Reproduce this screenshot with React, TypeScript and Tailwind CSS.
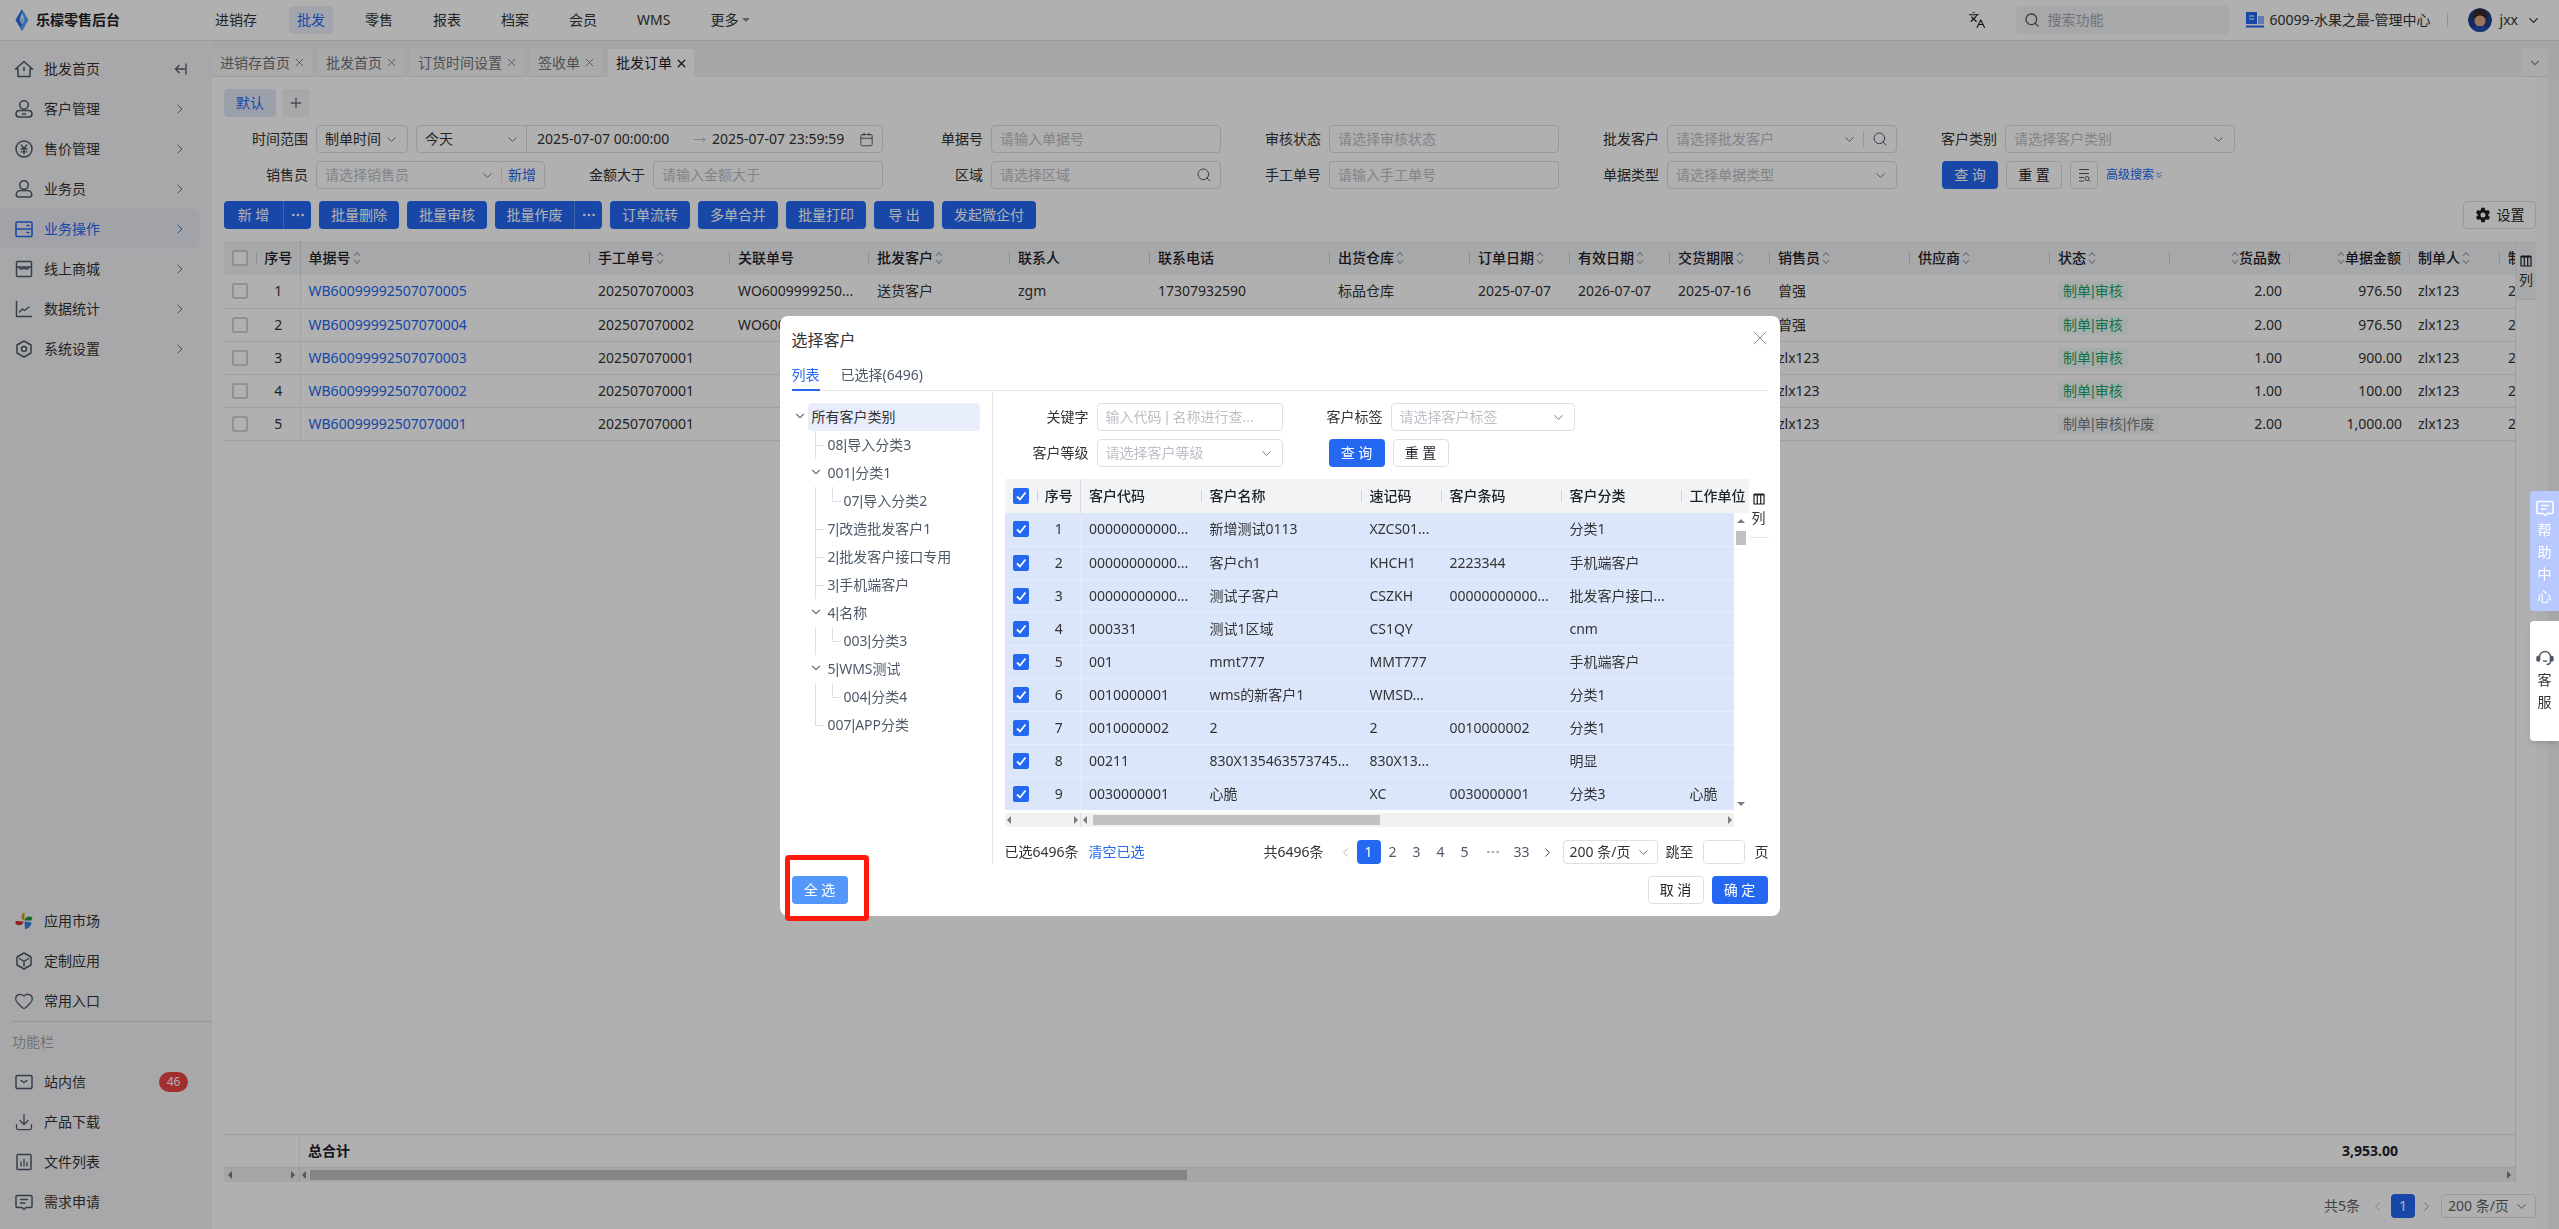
import { Fragment, ReactNode } from 'react';
import {
  ChevronDown,
  ChevronLeft,
  ChevronRight,
  Search,
  Plus,
  X,
  Heart,
  Download,
  Languages,
  Ellipsis,
  Calendar,
  MoveRight,
  ChevronsDown,
} from 'lucide-react';
import { IoSettingsSharp } from 'react-icons/io5';

const Svg = ({ children, className = 'text-[#4e5969]' }: { children: ReactNode; className?: string }) => (
  <svg viewBox="0 0 20 20" fill="none" stroke="currentColor" strokeWidth="1.5" strokeLinecap="round" strokeLinejoin="round" className={`w-5 h-5 shrink-0 ${className}`}>
    {children}
  </svg>
);

const HomeIcon = () => (
  <Svg>
    <path d="M1.5 10 10 2.5 18.5 10H16v7.5H4V10z" />
    <path d="M10 8.5v3" />
  </Svg>
);
const CustomerIcon = () => (
  <Svg>
    <circle cx="10" cy="6" r="4.2" />
    <rect x="2" y="11.5" width="16" height="6.5" rx="3.2" />
    <path d="M8.5 15h3" />
  </Svg>
);
const YenIcon = () => (
  <Svg>
    <circle cx="10" cy="10" r="8" />
    <path d="m7.3 6 2.7 3.5L12.7 6M7 10h6M7 12.8h6M10 9.5V15" strokeWidth="1.3" />
  </Svg>
);
const UserIcon = () => (
  <Svg>
    <circle cx="10" cy="6" r="4.3" />
    <path d="M2.2 15.5c0-2.5 2.3-4 4.8-4h6c2.5 0 4.8 1.5 4.8 4 0 1.5-1 2.5-2.5 2.5H4.7c-1.500 0-2.500-1-2.500-2.500z" />
  </Svg>
);
const OpsIcon = () => (
  <Svg className="text-[#2468f2]">
    <rect x="2" y="3" width="16" height="14.5" rx="1" />
    <path d="M2 10h16M13 6.500h2M13 13.500h2" />
  </Svg>
);
const StoreIcon = () => (
  <Svg>
    <rect x="2.5" y="2.5" width="15" height="15" rx="1" />
    <path d="M2.500 8h15M5 8a2.500 2 0 0 0 5 0 2.500 2 0 0 0 5 0" strokeWidth="1.3" />
  </Svg>
);
const ChartIcon = () => (
  <Svg>
    <path d="M2.500 2.500v15h15" />
    <path d="m5.500 13 3-3 2 1.500L15 8" strokeWidth="1.3" />
  </Svg>
);
const HexIcon = () => (
  <Svg>
    <path d="M10 2 17 6v8l-7 4-7-4V6z" />
    <circle cx="10" cy="10" r="2.5" />
  </Svg>
);
const BoxIcon = () => (
  <Svg>
    <path d="M10 2 17 6v8l-7 4-7-4V6z" />
    <path d="m5.500 7.500 4.500 3 4.500-3M10 10.500V15" />
  </Svg>
);
const PinwheelIcon = () => (
  <svg viewBox="0 0 20 20" className="w-5 h-5 shrink-0">
    <path d="M9.500 9.500C6.500 7.500 7 2.500 10.500 1.500V9z" fill="#d79b09" />
    <path d="M10.500 9.500C11 6 15 4 18.500 6.500l-1 3z" fill="#1f9d3a" />
    <path d="M10.500 10.500c3 0 5.500 1 7 1-0.500 4-3.500 6.500-6.500 6.500z" fill="#2f80e0" />
    <path d="M9.500 10.500C9 14 5 15.500 1.800 13c-0.500-1 -0.300-2.500 0.200-3z" fill="#d32f2f" />
  </svg>
);
const InboxIcon = () => (
  <Svg>
    <rect x="2" y="3.5" width="16" height="13" rx="1.2" />
    <path d="m7 8.500 3 2 3-2" />
  </Svg>
);
const FileBarsIcon = () => (
  <Svg>
    <rect x="3" y="2.5" width="14" height="15" rx="1" />
    <path d="M7 10v4M10 7.500V14M13 10.500V14" strokeWidth="1.3" />
  </Svg>
);
const CommentIcon = ({ className }: { className?: string }) => (
  <Svg className={className}>
    <path d="M3 3.500h14a1 1 0 0 1 1 1v10a1 1 0 0 1-1 1h-5l-2 2-2-2H3a1 1 0 0 1-1-1v-10a1 1 0 0 1 1-1z" />
    <path d="M6.500 7.500h7M6.500 11H11" />
  </Svg>
);

const Sort = () => (
  <svg viewBox="0 0 8 14" className="w-2 h-3.5 ml-0.5 shrink-0 text-[#9aa0a8]" fill="none" stroke="currentColor" strokeWidth="1.1">
    <path d="M1 5 4 1.500 7 5M1 9l3 3.500L7 9" />
  </svg>
);

const ColsIcon = () => (
  <svg viewBox="0 0 12 12" className="w-3 h-3" fill="none" stroke="#1d2129" strokeWidth="1.2">
    <path d="M1 1.500h10v9.500H1zM4.300 2v9M7.700 2v9" />
    <path d="M1 1.500h10" strokeWidth="2" />
  </svg>
);

const Tri = ({ dir }: { dir: 'l' | 'r' | 'u' | 'd' }) => {
  const points = { l: '6,1 6,9 2,5', r: '4,1 4,9 8,5', u: '1,6 9,6 5,2', d: '1,4 9,4 5,8' }[dir];
  return (
    <svg viewBox="0 0 10 10" className="w-2.5 h-2.5 shrink-0">
      <polygon points={points} fill="#7d7d7d" />
    </svg>
  );
};

// the bar in these labels is much narrower in the reference than Noto Sans draws it
const Barred = ({ text }: { text: string }) => (
  <>
    {text.split('|').map((part, i) => (
      <Fragment key={i}>
        {i > 0 && <span className="font-['Liberation_Sans']">|</span>}
        {part}
      </Fragment>
    ))}
  </>
);

const Check = () => (
  <span className="flex items-center justify-center w-4 h-4 rounded-[2px] bg-[#2468f2] shrink-0">
    <svg viewBox="0 0 12 12" className="w-3 h-3" fill="none" stroke="#fff" strokeWidth="1.8">
      <path d="m2 6.500 3 3 5.500-7" />
    </svg>
  </span>
);
const Box = () => <span className="block w-4 h-4 rounded-[2px] border-2 border-[#d0d3d8] bg-white shrink-0" />;

const Field = ({ children, className = '' }: { children: ReactNode; className?: string }) => (
  <div className={`flex items-center h-7 px-2 border border-[#dcdfe6] rounded bg-white text-sm leading-none whitespace-nowrap ${className}`}>
    {children}
  </div>
);
const Ph = ({ children }: { children: ReactNode }) => <span className="flex-1 text-[#bdc0c6] truncate leading-5">{children}</span>;
const Down = () => <ChevronDown size={15} strokeWidth={1.6} className="text-[#77797e] shrink-0" />;

const Btn = ({ children, className = '' }: { children: ReactNode; className?: string }) => (
  <div className={`flex items-center justify-center h-7 rounded bg-[#2468f2] text-white text-sm whitespace-nowrap ${className}`}>{children}</div>
);
const GhostBtn = ({ children, className = '' }: { children: ReactNode; className?: string }) => (
  <div className={`flex items-center justify-center h-7 rounded border border-[#dcdfe6] bg-white text-sm text-[#1d2129] whitespace-nowrap ${className}`}>{children}</div>
);

const FormCell = ({ label, children, className = '' }: { label: string; children: ReactNode; className?: string }) => (
  <div className={`flex items-center justify-end ${className}`}>
    <span className="mr-2 text-sm text-[#333] whitespace-nowrap">{label}</span>
    {children}
  </div>
);

const mainNav = ['批发', '零售', '报表', '档案', '会员', 'WMS'];

const TopBar = () => (
  <header className="flex items-center h-[41px] border-b border-[#e0e1e4] bg-white shrink-0">
    <div className="flex items-center w-[207px] pl-3.5 shrink-0">
      <svg viewBox="0 0 16 24" className="w-4 h-6 shrink-0">
        <path d="M8 1 1.500 12 8 23l2-3.500L5.500 12 8 5z" fill="#2468f2" />
        <path d="M8 1l6.500 11L8 23l-2-3.500L10.500 12 8 5z" fill="#5aa0f5" />
        <path d="M8 8.500 10 12l-2 3.500L6 12z" fill="#9cc5fa" />
      </svg>
      <span className="ml-1.5 text-sm font-bold text-[#1d2129]">乐檬零售后台</span>
    </div>
    <nav className="flex items-center gap-6 text-sm text-[#333]">
      <span className="px-2">进销存</span>
      {mainNav.map((n) => (
        <span key={n} className={`flex items-center h-7 px-2 rounded ${n === '批发' ? 'bg-[#ecf0fb] text-[#2468f2]' : ''}`}>{n}</span>
      ))}
      <span className="flex items-center px-2">
        更多
        <svg viewBox="0 0 8 6" className="w-2 h-1.5 ml-1"><path d="M0 1h8L4 5z" fill="#8b8b8b" /></svg>
      </span>
    </nav>
    <div className="flex items-center ml-auto">
      <Languages size={18} strokeWidth={1.5} className="text-[#1d2129]" />
      <div className="flex items-center w-[213px] h-7 ml-[30px] pl-2 rounded bg-[#f2f3f5] text-sm">
        <Search size={16} className="text-[#5a5d63]" />
        <span className="ml-2 text-[#a4a7ad]">搜索功能</span>
      </div>
      <svg viewBox="0 0 18 16" className="w-[18px] h-4 ml-[17px]">
        <rect x="0" y="0" width="11" height="12" fill="#2468f2" />
        <rect x="12" y="4" width="6" height="8" fill="#8fb4f8" />
        <rect x="0" y="13.500" width="18" height="2" fill="#2468f2" />
        <path d="M3 4h5M3 7h5" stroke="#fff" />
      </svg>
      <span className="ml-1.5 text-sm text-[#333]">60099-水果之最-管理中心</span>
      <i className="w-px h-3.5 mx-4 bg-[#cfd1d4]" />
      <svg viewBox="0 0 24 24" className="w-6 h-6 ml-1 rounded-full">
        <circle cx="12" cy="12" r="12" fill="#1c3f8f" />
        <path d="M4 12C4 4 8 1 12 1s9 3 8 11c-2-3-5-4-8-4s-6 1-8 4z" fill="#3b2a20" />
        <circle cx="12" cy="13" r="5.5" fill="#e2a77f" />
        <path d="M3 24c1-6 5-6 9-6s8 0 9 6z" fill="#2050b0" />
      </svg>
      <span className="ml-2 text-sm text-[#333]">jxx</span>
      <ChevronDown size={15} className="ml-2 mr-[18px] text-[#333]" />
    </div>
  </header>
);

const SideItem = ({ icon, label, arrow = true, active = false, extra }: { icon: ReactNode; label: string; arrow?: boolean; active?: boolean; extra?: ReactNode }) => (
  <div className={`flex items-center h-10 w-[200px] pl-3.5 pr-3 rounded-r-lg text-sm ${active ? 'bg-[#ebecf3] text-[#2468f2]' : 'text-[#333]'}`}>
    {icon}
    <span className="ml-2.5 flex-1">{label}</span>
    {extra}
    {arrow && <ChevronRight size={16} strokeWidth={1.5} className={active ? 'text-[#2468f2]' : 'text-[#6b6e74]'} />}
  </div>
);

const Sidebar = () => (
  <aside className="flex flex-col justify-between w-[212px] shrink-0 bg-[#f3f4f6] pt-2 pb-[7px]">
    <div>
      <SideItem
        icon={<HomeIcon />}
        label="批发首页"
        arrow={false}
        extra={
          <svg viewBox="0 0 14 14" className="w-3.5 h-3.5 text-[#5a5d63]" fill="none" stroke="currentColor" strokeWidth="1.4">
            <path d="M12 1.500v11M11 7H1.500M5.500 3 1.500 7l4 4" />
          </svg>
        }
      />
      <SideItem icon={<CustomerIcon />} label="客户管理" />
      <SideItem icon={<YenIcon />} label="售价管理" />
      <SideItem icon={<UserIcon />} label="业务员" />
      <SideItem icon={<OpsIcon />} label="业务操作" active />
      <SideItem icon={<StoreIcon />} label="线上商城" />
      <SideItem icon={<ChartIcon />} label="数据统计" />
      <SideItem icon={<HexIcon />} label="系统设置" />
    </div>
    <div>
      <SideItem icon={<PinwheelIcon />} label="应用市场" arrow={false} />
      <SideItem icon={<BoxIcon />} label="定制应用" arrow={false} />
      <SideItem icon={<Heart size={20} strokeWidth={1.5} className="text-[#4e5969]" />} label="常用入口" arrow={false} />
      <div className="ml-3 border-t border-[#d9dadd]" />
      <div className="h-[40px] pl-3 pt-[10px] text-sm leading-5 text-[#a3a5aa]">功能栏</div>
      <SideItem
        icon={<InboxIcon />}
        label="站内信"
        arrow={false}
        extra={<span className="flex items-center justify-center w-[29px] h-5 rounded-full bg-[#e94545] text-white text-xs">46</span>}
      />
      <SideItem icon={<Download size={20} strokeWidth={1.5} className="text-[#4e5969]" />} label="产品下载" arrow={false} />
      <SideItem icon={<FileBarsIcon />} label="文件列表" arrow={false} />
      <SideItem icon={<CommentIcon />} label="需求申请" arrow={false} />
    </div>
  </aside>
);

const tabs = ['进销存首页', '批发首页', '订货时间设置', '签收单', '批发订单'];

const TabStrip = () => (
  <div className="flex h-9 pt-2 pr-[11px] bg-[#eff1f4] shrink-0">
    <div className="flex gap-1.5">
      {tabs.map((t, i) => {
        const active = i === tabs.length - 1;
        return (
          <div key={t} className={`flex items-center h-7 pl-2 pr-1.5 text-sm ${active ? 'bg-white text-[#1d2129]' : 'bg-[#f6f7f8] text-[#6f737a] border-b border-[#e3e4e6]'}`}>
            {t}
            <X size={13} strokeWidth={active ? 2.4 : 1.6} className="ml-[3px]" />
          </div>
        );
      })}
    </div>
    <div className="flex items-center justify-center ml-auto w-[27px] h-7 bg-[#f8f8f9] border-b border-[#e3e4e6]">
      <ChevronDown size={14} className="text-[#8a8d92]" />
    </div>
  </div>
);

const FilterForm = () => (
  <div className="grid grid-cols-[321px_repeat(5,338px)] gap-y-2 mt-2">
    <div className="col-span-2 flex items-center">
      <span className="w-[84px] mr-2 text-right text-sm text-[#333]">时间范围</span>
      <Field className="w-[92px] justify-between">
        <span className="text-[#333] leading-5">制单时间</span>
        <Down />
      </Field>
      <Field className="w-[467px] ml-2 !px-0">
        <div className="flex items-center justify-between w-[110px] h-full pl-2 pr-[6px] border-r border-[#dcdfe6]">
          <span className="text-[#333] leading-5">今天</span>
          <Down />
        </div>
        <span className="w-[166px] pl-2.5 text-[#333] leading-5">2025-07-07 00:00:00</span>
        <MoveRight size={13} strokeWidth={1.2} className="mr-1.5 text-[#9a9da3]" />
        <span className="flex-1 text-[#333] leading-5">2025-07-07 23:59:59</span>
        <Calendar size={15} strokeWidth={1.5} className="mr-2 text-[#4e5969]" />
      </Field>
    </div>
    <FormCell label="单据号"><Field className="w-[230px]"><Ph>请输入单据号</Ph></Field></FormCell>
    <FormCell label="审核状态"><Field className="w-[230px]"><Ph>请选择审核状态</Ph></Field></FormCell>
    <FormCell label="批发客户">
      <Field className="w-[230px] !pr-0">
        <Ph>请选择批发客户</Ph>
        <Down />
        <i className="w-px h-4 ml-1.5 bg-[#dcdfe6]" />
        <Search size={16} strokeWidth={1.5} className="mx-2 text-[#4e5969]" />
      </Field>
    </FormCell>
    <FormCell label="客户类别"><Field className="w-[230px]"><Ph>请选择客户类别</Ph><Down /></Field></FormCell>

    <FormCell label="销售员">
      <Field className="w-[229px]">
        <Ph>请选择销售员</Ph>
        <Down />
        <i className="w-px h-4 mx-1.5 bg-[#dcdfe6]" />
        <span className="text-[#2468f2] leading-5">新增</span>
      </Field>
    </FormCell>
    <FormCell label="金额大于"><Field className="w-[230px]"><Ph>请输入金额大于</Ph></Field></FormCell>
    <FormCell label="区域">
      <Field className="w-[230px]"><Ph>请选择区域</Ph><Search size={16} strokeWidth={1.5} className="text-[#4e5969]" /></Field>
    </FormCell>
    <FormCell label="手工单号"><Field className="w-[230px]"><Ph>请输入手工单号</Ph></Field></FormCell>
    <FormCell label="单据类型"><Field className="w-[230px]"><Ph>请选择单据类型</Ph><Down /></Field></FormCell>
    <div className="flex items-center gap-2 pl-[45px]">
      <Btn className="w-14">查 询</Btn>
      <GhostBtn className="w-14">重 置</GhostBtn>
      <GhostBtn className="w-7">
        <svg viewBox="0 0 14 16" className="w-3.5 h-4" fill="none" stroke="#4e5969">
          <path d="M2 2.500h10M2 6.500h10M2 10.500h5M2 14h5" />
          <circle cx="10" cy="11.500" r="2" />
          <path d="m11.500 13 1.500 1.500" />
        </svg>
      </GhostBtn>
      <span className="flex items-center text-xs text-[#2468f2] whitespace-nowrap">
        高级搜索
        <ChevronsDown size={10} />
      </span>
    </div>
  </div>
);

const MoreSeg = () => (
  <span className="flex items-center justify-center w-7 h-full border-l border-[#5a8ff5]">
    <Ellipsis size={16} />
  </span>
);

const ActionBar = () => (
  <div className="flex items-center gap-2 mt-3">
    <Btn className="w-[87px]">
      <span className="flex-1 text-center">新 增</span>
      <MoreSeg />
    </Btn>
    <Btn className="w-20">批量删除</Btn>
    <Btn className="w-20">批量审核</Btn>
    <Btn className="w-[107px]">
      <span className="flex-1 text-center">批量作废</span>
      <MoreSeg />
    </Btn>
    <Btn className="w-20">订单流转</Btn>
    <Btn className="w-20">多单合并</Btn>
    <Btn className="w-20">批量打印</Btn>
    <Btn className="w-[60px]">导 出</Btn>
    <Btn className="w-[94px]">发起微企付</Btn>
    <GhostBtn className="w-[73px] ml-auto">
      <IoSettingsSharp size={16} className="mr-1.5" />
      设置
    </GhostBtn>
  </div>
);

type Col = { t: string; sort?: boolean; right?: boolean };
const orderCols: Col[] = [
  { t: '单据号', sort: true },
  { t: '手工单号', sort: true },
  { t: '关联单号' },
  { t: '批发客户', sort: true },
  { t: '联系人' },
  { t: '联系电话' },
  { t: '出货仓库', sort: true },
  { t: '订单日期', sort: true },
  { t: '有效日期', sort: true },
  { t: '交货期限', sort: true },
  { t: '销售员', sort: true },
  { t: '供应商', sort: true },
  { t: '状态', sort: true },
  { t: '货品数', sort: true, right: true },
  { t: '单据金额', sort: true, right: true },
  { t: '制单人', sort: true },
  { t: '制单日期' },
];

type Order = { no: string; manual: string; link: string; cust: string; man: string; tel: string; wh: string; d1: string; d2: string; d3: string; sales: string; status: string; qty: string; amt: string };
const orders: Order[] = [
  { no: 'WB60099992507070005', manual: '202507070003', link: 'WO6009999250...', cust: '送货客户', man: 'zgm', tel: '17307932590', wh: '标品仓库', d1: '2025-07-07', d2: '2026-07-07', d3: '2025-07-16', sales: '曾强', status: '制单|审核', qty: '2.00', amt: '976.50' },
  { no: 'WB60099992507070004', manual: '202507070002', link: 'WO6009999250...', cust: '', man: '', tel: '', wh: '', d1: '', d2: '', d3: '', sales: '曾强', status: '制单|审核', qty: '2.00', amt: '976.50' },
  { no: 'WB60099992507070003', manual: '202507070001', link: '', cust: '', man: '', tel: '', wh: '', d1: '', d2: '', d3: '', sales: 'zlx123', status: '制单|审核', qty: '1.00', amt: '900.00' },
  { no: 'WB60099992507070002', manual: '202507070001', link: '', cust: '', man: '', tel: '', wh: '', d1: '', d2: '', d3: '', sales: 'zlx123', status: '制单|审核', qty: '1.00', amt: '100.00' },
  { no: 'WB60099992507070001', manual: '202507070001', link: '', cust: '', man: '', tel: '', wh: '', d1: '', d2: '', d3: '', sales: 'zlx123', status: '制单|审核|作废', qty: '2.00', amt: '1,000.00' },
];

const td = 'h-[33px] px-2 truncate';

const HeadCell = ({ c }: { c: Col }) => (
  <th className="p-0 font-medium text-left">
    <div className={`flex items-center h-[34px] ${c.right ? 'justify-end' : 'justify-between'}`}>
      <span className={`flex items-center pl-2 min-w-0 whitespace-nowrap ${c.right ? 'pr-2 flex-row-reverse' : ''}`}>
        {c.t}
        {c.sort && <Sort />}
      </span>
      <i className="w-px h-3 bg-[#cfd2d7] shrink-0" />
    </div>
  </th>
);

const ColToggle = ({ className = '' }: { className?: string }) => (
  <div className={`w-5 shrink-0 flex flex-col items-center h-[59px] pt-[14px] text-sm leading-5 text-[#333] border-b border-[#e8e9ec] ${className}`}>
    <ColsIcon />
    <span className="mt-[3px]">列</span>
  </div>
);

const OrderTable = () => (
  <div className="flex flex-1 min-h-0 mt-3">
    <div className="flex flex-col w-[2292px] shrink-0 border-r border-[#e5e6eb]">
      <div className="flex-1 min-h-0 overflow-hidden">
        <table className="table-fixed w-[2396px] text-sm text-[#333]">
          <colgroup>
            <col className="w-[76px]" />
            <col className="w-[290px]" />
            <col className="w-[140px]" />
            <col className="w-[139px]" />
            <col className="w-[141px]" />
            <col className="w-[140px]" />
            <col className="w-[180px]" />
            <col className="w-[140px]" />
            <col className="w-[100px]" />
            <col className="w-[100px]" />
            <col className="w-[100px]" />
            <col className="w-[140px]" />
            <col className="w-[140px]" />
            <col className="w-[120px]" />
            <col className="w-[120px]" />
            <col className="w-[120px]" />
            <col className="w-[90px]" />
            <col className="w-[120px]" />
          </colgroup>
          <thead>
            <tr className="bg-[#f2f3f5] text-[#1d2129]">
              <th className="p-0 border-r border-[#d8dadf]">
                <div className="flex items-center h-[34px] pl-2">
                  <Box />
                  <i className="w-px h-3 ml-2 bg-[#cfd2d7]" />
                  <span className="flex-1 text-center font-medium">序号</span>
                </div>
              </th>
              {orderCols.map((c) => (
                <HeadCell key={c.t} c={c} />
              ))}
            </tr>
          </thead>
          <tbody>
            {orders.map((o, i) => (
              <tr key={o.no} className="border-b border-[#e5e6eb]">
                <td className="p-0 border-r border-[#ececef]">
                  <div className="flex items-center h-[32px] pl-2">
                    <Box />
                    <span className="flex-1 pl-[9px] text-center">{i + 1}</span>
                  </div>
                </td>
                <td className={`${td} text-[#2468f2]`}>{o.no}</td>
                <td className={td}>{o.manual}</td>
                <td className={td}>{o.link}</td>
                <td className={td}>{o.cust}</td>
                <td className={td}>{o.man}</td>
                <td className={td}>{o.tel}</td>
                <td className={td}>{o.wh}</td>
                <td className={td}>{o.d1}</td>
                <td className={td}>{o.d2}</td>
                <td className={td}>{o.d3}</td>
                <td className={td}>{o.sales}</td>
                <td className={td} />
                <td className="h-[33px] px-2">
                  <span className={`inline-flex px-[5px] h-5 items-center whitespace-nowrap ${o.status.endsWith('作废') ? 'bg-[#f5f6f7] text-[#7a7d83]' : 'bg-[#f0faf5] text-[#22a56b]'}`}>
                    <Barred text={o.status} />
                  </span>
                </td>
                <td className={`${td} text-right`}>{o.qty}</td>
                <td className={`${td} text-right`}>{o.amt}</td>
                <td className={td}>zlx123</td>
                <td className={td}>2025-07-07</td>
              </tr>
            ))}
          </tbody>
        </table>
      </div>
      <div className="flex items-center h-[33px] border-t border-[#e0e2e6] shrink-0 text-sm font-bold text-[#1d2129]">
        <span className="w-[76px] h-full border-r border-[#ececef]" />
        <span className="flex-1 pl-2">总合计</span>
        <span className="w-[400px] pr-[117px] text-right">3,953.00</span>
      </div>
      <div className="flex items-center h-[15px] bg-[#f1f1f1] border-t border-[#e5e6eb] shrink-0">
        <div className="flex items-center justify-between w-[76px] h-full px-0.5 border-r border-[#e0e0e0]">
          <Tri dir="l" />
          <Tri dir="r" />
        </div>
        <Tri dir="l" />
        <i className="block w-[877px] h-2.5 bg-[#c1c1c1]" />
        <span className="ml-auto mr-0.5"><Tri dir="r" /></span>
      </div>
    </div>
    <div className="w-5 shrink-0">
      <ColToggle className="bg-[#f2f3f5]" />
    </div>
  </div>
);

const Pager = () => (
  <div className="flex items-center justify-end h-6 mt-3 text-sm text-[#5c5f65] shrink-0">
    <span>共5条</span>
    <ChevronLeft size={15} strokeWidth={1.3} className="ml-2.5 text-[#aaa]" />
    <span className="flex items-center justify-center w-6 h-6 ml-1.5 rounded bg-[#2468f2] text-white">1</span>
    <ChevronRight size={15} strokeWidth={1.3} className="ml-1 text-[#888]" />
    <div className="flex items-center justify-between w-[95px] h-6 ml-[7px] px-1.5 border border-[#dcdfe6] rounded">
      <span className="whitespace-nowrap">200 条/页</span>
      <Down />
    </div>
  </div>
);

type TreeRow = { label: string; lv: 0 | 1 | 2; chev?: boolean; v1?: 'full' | 'half'; sel?: boolean };
const tree: TreeRow[] = [
  { label: '所有客户类别', lv: 0, chev: true, sel: true },
  { label: '08|导入分类3', lv: 1, v1: 'full' },
  { label: '001|分类1', lv: 1, chev: true },
  { label: '07|导入分类2', lv: 2, v1: 'full' },
  { label: '7|改造批发客户1', lv: 1, v1: 'full' },
  { label: '2|批发客户接口专用', lv: 1, v1: 'full' },
  { label: '3|手机端客户', lv: 1, v1: 'full' },
  { label: '4|名称', lv: 1, chev: true },
  { label: '003|分类3', lv: 2, v1: 'full' },
  { label: '5|WMS测试', lv: 1, chev: true },
  { label: '004|分类4', lv: 2, v1: 'full' },
  { label: '007|APP分类', lv: 1, v1: 'half' },
];

const TreeItem = ({ r }: { r: TreeRow }) => (
  <div className="relative h-7 text-sm text-[#4e5969]">
    {r.v1 === 'full' && <i className="absolute left-[23px] top-0 bottom-0 w-px bg-[#dcdfe3]" />}
    {r.v1 === 'half' && <i className="absolute left-[23px] top-0 h-3.5 w-px bg-[#dcdfe3]" />}
    {r.lv === 1 && !r.chev && <i className="absolute left-[23px] top-3.5 w-[9px] h-px bg-[#dcdfe3]" />}
    {r.lv === 2 && <i className="absolute left-[40px] top-0 h-3.5 w-px bg-[#dcdfe3]" />}
    {r.lv === 2 && <i className="absolute left-[40px] top-3.5 w-[9px] h-px bg-[#dcdfe3]" />}
    {r.chev && (
      <ChevronDown size={14} className={`absolute top-[6px] text-[#777] ${r.lv === 0 ? 'left-[1px]' : 'left-[17px]'}`} />
    )}
    {r.lv === 0 && (
      <div className="flex items-center h-7 w-[172px] ml-4 pl-1 rounded bg-[#e8edfb] text-[#333]">{r.label}</div>
    )}
    {r.lv === 1 && <div className="flex items-center h-7 pl-9 whitespace-nowrap"><span><Barred text={r.label} /></span></div>}
    {r.lv === 2 && <div className="flex items-center h-7 pl-[52px] whitespace-nowrap"><span><Barred text={r.label} /></span></div>}
  </div>
);

const custCols = ['客户代码', '客户名称', '速记码', '客户条码', '客户分类', '工作单位'];
const customers = [
  ['00000000000...', '新增测试0113', 'XZCS01...', '', '分类1', ''],
  ['00000000000...', '客户ch1', 'KHCH1', '2223344', '手机端客户', ''],
  ['00000000000...', '测试子客户', 'CSZKH', '00000000000...', '批发客户接口...', ''],
  ['000331', '测试1区域', 'CS1QY', '', 'cnm', ''],
  ['001', 'mmt777', 'MMT777', '', '手机端客户', ''],
  ['0010000001', 'wms的新客户1', 'WMSD...', '', '分类1', ''],
  ['0010000002', '2', '2', '0010000002', '分类1', ''],
  ['00211', '830X135463573745...', '830X13...', '', '明显', ''],
  ['0030000001', '心脆', 'XC', '0030000001', '分类3', '心脆'],
];

const CustColgroup = () => (
  <colgroup>
    <col className="w-[76px]" />
    <col className="w-[121px]" />
    <col className="w-[160px]" />
    <col className="w-[80px]" />
    <col className="w-[120px]" />
    <col className="w-[120px]" />
    <col className="w-[80px]" />
  </colgroup>
);

const CustomerTable = () => (
  <div className="flex mt-3 w-[764px] h-[348px] text-sm text-[#333]">
    <div className="flex flex-col w-[744px] shrink-0">
      <div className="overflow-hidden h-[34px] shrink-0">
        <table className="table-fixed w-[757px]">
          <CustColgroup />
          <thead>
            <tr className="bg-[#f2f3f5] text-[#1d2129]">
              <th className="p-0 border-r border-[#d8dadf]">
                <div className="flex items-center h-[34px] pl-2">
                  <Check />
                  <i className="w-px h-3 ml-2 bg-[#cfd2d7]" />
                  <span className="flex-1 text-center font-medium">序号</span>
                </div>
              </th>
              {custCols.map((t) => (
                <HeadCell key={t} c={{ t }} />
              ))}
            </tr>
          </thead>
        </table>
      </div>
      <div className="flex h-[297px] shrink-0">
        <div className="w-[729px] shrink-0 overflow-hidden">
          <table className="table-fixed w-[757px]">
            <CustColgroup />
            <tbody>
              {customers.map((row, i) => (
                <tr key={i} className="bg-[#dce6fb] border-b border-[#e9eefb]">
                  <td className="p-0 border-r border-[#e6ecfb]">
                    <div className="flex items-center h-[32px] pl-2">
                      <Check />
                      <span className="flex-1 pl-[9px] text-center">{i + 1}</span>
                    </div>
                  </td>
                  {row.map((v, j) => (
                    <td key={j} className={td}>{v}</td>
                  ))}
                </tr>
              ))}
            </tbody>
          </table>
        </div>
        <div className="flex flex-col items-center w-[15px] pt-1 pb-0.5">
          <Tri dir="u" />
          <i className="block w-2.5 h-3.5 mt-1 bg-[#c1c1c1]" />
          <span className="mt-auto"><Tri dir="d" /></span>
        </div>
      </div>
      <div className="flex items-center h-[14px] mt-[3px] w-[729px] bg-[#f1f1f1]">
        <div className="flex items-center justify-between w-[76px] h-full border-r border-[#e0e0e0]">
          <Tri dir="l" />
          <Tri dir="r" />
        </div>
        <Tri dir="l" />
        <i className="block w-[287px] h-2.5 ml-0.5 bg-[#c1c1c1]" />
        <span className="ml-auto"><Tri dir="r" /></span>
      </div>
    </div>
    <ColToggle className="bg-white" />
  </div>
);

const CustomerPager = () => (
  <div className="flex items-center h-6 mt-[13px] text-sm text-[#333] whitespace-nowrap">
    <span>已选6496条</span>
    <span className="ml-2.5 text-[#2468f2]">清空已选</span>
    <span className="ml-[119px]">共6496条</span>
    <ChevronLeft size={15} strokeWidth={1.3} className="ml-3.5 text-[#aaa]" />
    <span className="flex items-center justify-center w-6 h-6 ml-1 rounded bg-[#2468f2] text-white">1</span>
    <span className="w-6 text-center text-[#4e5969]">2</span>
    <span className="w-6 text-center text-[#4e5969]">3</span>
    <span className="w-6 text-center text-[#4e5969]">4</span>
    <span className="w-6 text-center text-[#4e5969]">5</span>
    <span className="flex justify-center w-8 text-[#aaa]"><Ellipsis size={16} /></span>
    <span className="w-[26px] text-center text-[#4e5969]">33</span>
    <ChevronRight size={15} strokeWidth={1.5} className="ml-[5px] text-[#333]" />
    <div className="flex items-center justify-between w-[95px] h-6 ml-2 px-1.5 border border-[#dcdfe6] rounded">
      <span>200 条/页</span>
      <Down />
    </div>
    <span className="ml-2">跳至</span>
    <span className="w-[42px] h-6 ml-[9px] border border-[#dcdfe6] rounded" />
    <span className="ml-2.5">页</span>
  </div>
);

const CustomerModal = () => (
  <div className="fixed inset-0 z-10 flex justify-center pt-[316px] bg-black/31">
    <div className="relative flex flex-col w-[1000px] h-[600px] rounded-lg bg-white">
      <div className="flex items-center justify-between h-6 mt-3 px-3 text-base text-[#333] shrink-0">
        选择客户
        <X size={24} strokeWidth={1} className="text-[#8f9298] -mr-1 -mt-1" />
      </div>
      <div className="flex gap-[21px] h-[39px] mx-3 border-b border-[#e5e6eb] text-sm shrink-0">
        <span className="h-[39px] pt-3 leading-[22px] border-b-2 border-[#2468f2] text-[#2468f2]">列表</span>
        <span className="pt-3 leading-[22px] text-[#4e5969]">已选择(6496)</span>
      </div>
      <div className="flex h-[473px] shrink-0">
        <div className="w-[201px] ml-3 pt-3 border-r border-[#e5e6eb] shrink-0">
          {tree.map((r) => (
            <TreeItem key={r.label} r={r} />
          ))}
        </div>
        <div className="flex-1 min-w-0 pl-3 pt-3">
          <div className="grid grid-cols-[278px_292px] gap-y-2">
            <FormCell label="关键字">
              <Field className="w-[186px]">
                <Ph><Barred text="输入代码 | 名称进行查..." /></Ph>
              </Field>
            </FormCell>
            <FormCell label="客户标签">
              <Field className="w-[184px]"><Ph>请选择客户标签</Ph><Down /></Field>
            </FormCell>
            <FormCell label="客户等级">
              <Field className="w-[186px]"><Ph>请选择客户等级</Ph><Down /></Field>
            </FormCell>
            <div className="flex items-center gap-2 pl-[46px]">
              <Btn className="w-14">查 询</Btn>
              <GhostBtn className="w-14">重 置</GhostBtn>
            </div>
          </div>
          <CustomerTable />
          <CustomerPager />
        </div>
      </div>
      <div className="flex items-center justify-between px-3 pt-3">
        <Btn className="w-14 !bg-[#5397fb]">全 选</Btn>
        <div className="flex gap-2">
          <GhostBtn className="w-14">取 消</GhostBtn>
          <Btn className="w-14">确 定</Btn>
        </div>
      </div>
      <div className="absolute left-[5px] top-[539px] w-[84px] h-[66px] border-[5px] border-[#ff1a0c] rounded" />
    </div>
  </div>
);

const SideWidgets = () => (
  <div className="fixed right-0 top-[491px] z-20 flex flex-col gap-2.5 w-[29px] text-sm">
    <div className="flex flex-col items-center h-[120px] pt-[7px] rounded-l bg-[#b7c9ff] text-white leading-[22px]">
      <CommentIcon className="text-white" />
      <span className="mt-[1px]">帮</span>
      <span>助</span>
      <span>中</span>
      <span>心</span>
    </div>
    <div className="flex flex-col items-center justify-center h-[120px] rounded-l bg-white text-[#333] leading-[22px] shadow-md">
      <svg viewBox="0 0 18 18" className="w-[18px] h-[18px] text-[#4e5969]" fill="none" stroke="currentColor" strokeWidth="1.4">
        <path d="M3.500 11V8a5.500 5.500 0 0 1 11 0v4c0 2-1.500 3.500-4 3.500" />
        <rect x="1" y="7.500" width="2.500" height="4.500" rx="1" fill="currentColor" />
        <rect x="14.500" y="7.500" width="2.500" height="4.500" rx="1" fill="currentColor" />
        <path d="M7 11.500c1 .8 3 .8 4 0" />
      </svg>
      <span className="mt-[2px]">客</span>
      <span>服</span>
    </div>
  </div>
);

export default function App() {
  return (
    <div className="relative flex flex-col h-screen overflow-hidden bg-white font-['Noto_Sans','Noto_Sans_CJK_SC',sans-serif] text-[#333]">
      <TopBar />
      <div className="flex flex-1 min-h-0">
        <Sidebar />
        <main className="flex flex-col flex-1 min-w-0">
          <TabStrip />
          <div className="flex flex-1 min-h-0">
            <div className="flex flex-col flex-1 min-w-0 pl-3 pt-3 pb-[11px]">
              <div className="flex gap-1.5 shrink-0">
                <span className="flex items-center justify-center w-[52px] h-7 rounded bg-[#e3e8f8] text-sm text-[#2468f2]">默认</span>
                <span className="flex items-center justify-center w-7 h-7 rounded bg-[#f2f3f5]">
                  <Plus size={16} className="text-[#6b6e74]" />
                </span>
              </div>
              <FilterForm />
              <ActionBar />
              <OrderTable />
              <Pager />
            </div>
            <div className="w-3 bg-[#fafbfc] shrink-0" />
            <div className="w-[11px] bg-[#f3f3f3] shrink-0" />
          </div>
        </main>
      </div>
      <CustomerModal />
      <SideWidgets />
    </div>
  );
}
